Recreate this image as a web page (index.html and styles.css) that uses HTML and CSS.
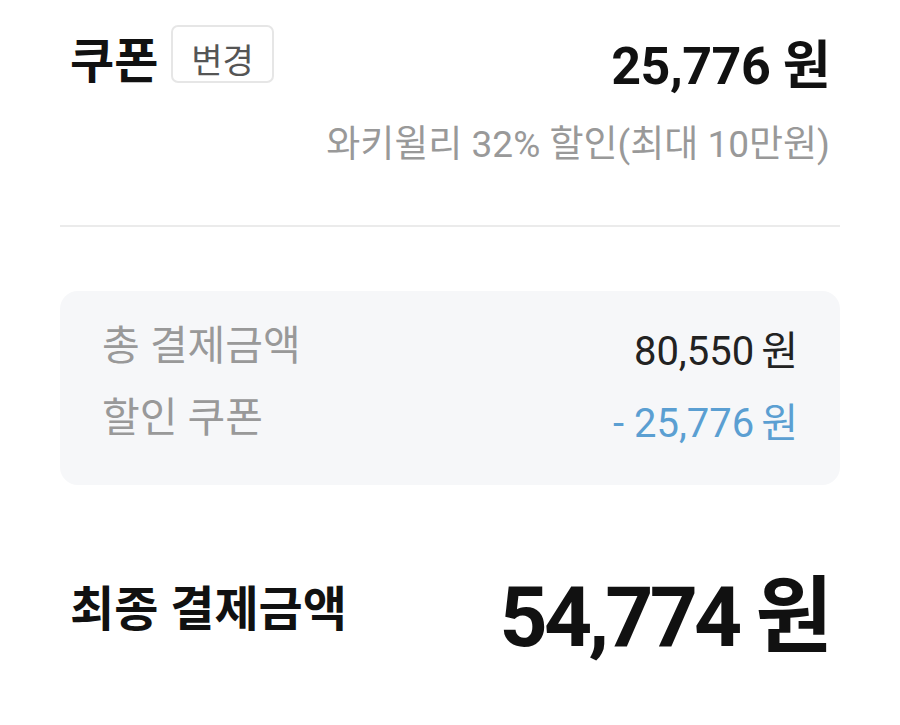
FILE: index.html
```html
<!DOCTYPE html>
<html lang="ko">
<head>
    <meta charset="UTF-8">
    <meta name="viewport" content="width=device-width, initial-scale=1.0">
    <title>쿠폰 결제</title>
    <link rel="stylesheet" href="styles.css">
</head>
<body>
    <main class="payment">
        <section class="coupon">
            <div class="coupon-head">
                <div class="coupon-title">
                    <h2>쿠폰</h2>
                    <button class="change-btn">변경</button>
                </div>
                <div class="coupon-amount">25,776 원</div>
            </div>
            <p class="coupon-desc">와키윌리 32% 할인(최대 10만원)</p>
        </section>

        <hr class="divider">

        <section class="summary">
            <div class="summary-row">
                <span class="summary-label">총 결제금액</span>
                <span class="summary-value">80,550<span class="won">원</span></span>
            </div>
            <div class="summary-row">
                <span class="summary-label">할인 쿠폰</span>
                <span class="summary-value discount">- 25,776<span class="won">원</span></span>
            </div>
        </section>

        <section class="final">
            <span class="final-label">최종 결제금액</span>
            <span class="final-value">54,774 원</span>
        </section>
    </main>
</body>
</html>
```

FILE: styles.css
```css
* {
    margin: 0;
    padding: 0;
    box-sizing: border-box;
}

body {
    font-family: 'Roboto', 'Noto Sans CJK KR', sans-serif;
    background-color: #ffffff;
    color: #111111;
}

.payment {
    padding: 25px 60px 0;
}

.coupon-head {
    display: flex;
    justify-content: space-between;
    align-items: flex-start;
    padding: 0 10px 0 10px;
}

.coupon-title {
    display: flex;
    align-items: flex-start;
    gap: 13px;
}

.coupon-title h2 {
    font-size: 48px;
    font-weight: 700;
    line-height: 58px;
    margin-top: 8px;
}

.change-btn {
    font-family: inherit;
    font-size: 34px;
    line-height: 40px;
    color: #555555;
    background-color: #ffffff;
    border: 2px solid #e6e6e6;
    border-radius: 7px;
    padding: 14px 18px 0;
}

.coupon-amount {
    font-size: 52px;
    font-weight: 700;
    line-height: 60px;
    letter-spacing: -0.5px;
    margin-top: 12px;
}

.coupon-desc {
    text-align: right;
    padding-right: 10px;
    margin-top: 26px;
    font-size: 37px;
    line-height: 44px;
    color: #999999;
}

.divider {
    border: none;
    border-top: 2px solid #ebebeb;
    margin-top: 58px;
}

.summary {
    margin-top: 64px;
    height: 194px;
    background-color: #f6f7f9;
    border-radius: 18px;
    padding: 22px 42px 0;
}

.summary-row {
    display: flex;
    justify-content: space-between;
    align-items: flex-start;
    line-height: 67px;
}

.summary-label {
    font-size: 41px;
    color: #999999;
}

.summary-value {
    font-size: 40px;
    color: #222222;
    padding-top: 5px;
}

.summary-value .won {
    margin-left: 7px;
}

.summary-value.discount {
    color: #5b9fd2;
}

.final {
    display: flex;
    justify-content: space-between;
    align-items: flex-start;
    margin-top: 83px;
    padding: 0 11px 0 10px;
}

.final-label {
    font-size: 48px;
    font-weight: 700;
    line-height: 60px;
    margin-top: 12px;
}

.final-value {
    font-size: 84px;
    font-weight: 700;
    line-height: 90px;
    letter-spacing: -3.8px;
    margin-top: 5px;
}
```
